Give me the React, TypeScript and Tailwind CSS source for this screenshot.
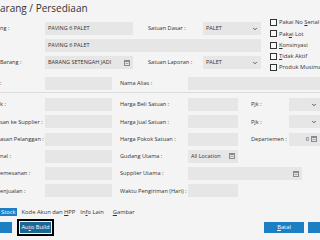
import { ChevronDown } from "lucide-react";

function LookupIcon() {
  return (
    <svg width="6" height="6" viewBox="0 0 6 6" className="shrink-0">
      <rect x="0.5" y="0.5" width="5" height="5" fill="none" stroke="#8a8a8a" />
      <rect x="0.5" y="0.5" width="5" height="1.5" fill="#8a8a8a" />
      <line x1="1.5" y1="3.5" x2="4.5" y2="3.5" stroke="#8a8a8a" strokeWidth="0.7" />
    </svg>
  );
}

function Field({ w, text, icon, select, right }: { w: string; text?: string; icon?: boolean; select?: boolean; right?: boolean }) {
  return (
    <div className={`${w} h-[13px] bg-[#e6e6e6] flex items-center px-[3px] shrink-0`}>
      <span className={`flex-1 truncate text-[5.5px] text-[#333] ${right ? "text-right pr-[2px]" : ""}`}>{text}</span>
      {icon && <LookupIcon />}
      {select && <ChevronDown size={6} strokeWidth={3.5} className="text-[#444]" />}
    </div>
  );
}

function Label({ w, children }: { w: string; children: React.ReactNode }) {
  return <div className={`${w} shrink-0 text-[5.6px] whitespace-nowrap`}>{children}</div>;
}

function Check({ children }: { children: React.ReactNode }) {
  return (
    <div className="flex items-center gap-[2px] h-[11.3px]">
      <div className="w-[7px] h-[7px] border border-[#333] bg-[#f9f9f9]" />
      <span className="text-[5.8px] whitespace-nowrap">{children}</span>
    </div>
  );
}

export default function App() {
  return (
    <div className="w-[320px] h-[240px] overflow-hidden bg-[#f4f4f4] text-[#333] font-['Open_Sans',sans-serif]">
      <div className="h-[22px] pt-[1px] text-[10px] leading-[14px] text-[#333]">arang / Persediaan</div>

      <div className="flex h-[55px]">
        <div className="w-[270px] shrink-0 flex flex-col gap-[4px]">
          <div className="flex items-center">
            <Label w="w-[45px]">ng :</Label>
            <Field w="w-[88px]" text="PAVING 6 PALET" />
            <Label w="w-[55px] ml-[15px]">Satuan Dasar :</Label>
            <Field w="w-[58px]" text="PALET" select />
          </div>
          <div className="flex items-center">
            <div className="w-[45px] shrink-0" />
            <Field w="w-[216px]" text="PAVING 6 PALET" />
          </div>
          <div className="flex items-center">
            <Label w="w-[45px]">Barang :</Label>
            <Field w="w-[88px]" text="BARANG SETENGAH JADI" icon />
            <Label w="w-[55px] ml-[15px]">Satuan Laporan :</Label>
            <Field w="w-[58px]" text="PALET" select />
          </div>
        </div>
        <div className="flex flex-col -mt-[5px]">
          <Check>Pakai No <u>S</u>erial</Check>
          <Check>Pak<u>a</u>i Lot</Check>
          <Check><u>K</u>onsinyasi</Check>
          <Check><u>T</u>idak Aktif</Check>
          <Check>Produk Musiman</Check>
        </div>
      </div>

      <div className="flex items-center">
        <Label w="w-[45px]">:</Label>
        <Field w="w-[67px]" />
        <Label w="w-[68px] ml-[8px]">Nama Alias :</Label>
        <Field w="w-[132px]" />
      </div>

      <div className="h-px bg-[#dcdcdc] mt-[2px] mb-[5px]" />

      <div className="flex flex-col gap-[4.3px]">
        <div className="flex items-center">
          <Label w="w-[45px]">k :</Label>
          <Field w="w-[67px]" />
          <Label w="w-[68px] ml-[8px]">Harga Beli Satuan :</Label>
          <Field w="w-[50px]" />
          <Label w="w-[38px] ml-[13px]">Pjk :</Label>
          <Field w="w-[31px]" select />
        </div>
        <div className="flex items-center">
          <Label w="w-[45px]">san ke Supplier :</Label>
          <Field w="w-[67px]" />
          <Label w="w-[68px] ml-[8px]">Harga Jual Satuan :</Label>
          <Field w="w-[50px]" />
          <Label w="w-[38px] ml-[13px]">Pjk :</Label>
          <Field w="w-[31px]" select />
        </div>
        <div className="flex items-center">
          <Label w="w-[45px]">asan Pelanggan :</Label>
          <Field w="w-[67px]" />
          <Label w="w-[68px] ml-[8px]">Harga Pokok Satuan :</Label>
          <Field w="w-[50px]" />
          <Label w="w-[38px] ml-[13px]">Departemen :</Label>
          <Field w="w-[31px]" text="0" icon right />
        </div>
        <div className="flex items-center">
          <Label w="w-[45px]">nal :</Label>
          <Field w="w-[67px]" />
          <Label w="w-[68px] ml-[8px]">Gudang Utama :</Label>
          <Field w="w-[50px]" text="All Location" icon />
        </div>
        <div className="flex items-center">
          <Label w="w-[45px]">emesanan :</Label>
          <Field w="w-[67px]" />
          <Label w="w-[68px] ml-[8px]">Supplier Utama :</Label>
          <Field w="w-[114px]" icon />
        </div>
        <div className="flex items-center">
          <Label w="w-[45px]">enjualan :</Label>
          <Field w="w-[67px]" />
          <Label w="w-[68px] ml-[8px]">Waktu Pengiriman (Hari) :</Label>
          <Field w="w-[50px]" />
        </div>
      </div>

      <div className="flex items-center h-[8px] mt-[11px] text-[5.8px] gap-[5px]">
        <span className="bg-[#1c7ec3] text-white px-[1px] h-[8px] leading-[8px]">Stock</span>
        <span>Kode Akun dan <u>H</u>PP</span>
        <span>In<u>f</u>o Lain</span>
        <span className="ml-[4px]"><u>G</u>ambar</span>
      </div>

      <div className="flex items-center mt-[3px]">
        <div className="w-[12px] h-[11px] bg-[#1c7ec3]" />
        <div className="ml-[5px] border-2 border-black p-px">
          <div className="w-[31px] h-[11px] bg-[#1a6796] text-white text-[5.8px] leading-[11px] text-center">Au<u>t</u>o Build</div>
        </div>
        <div className="flex-1" />
        <div className="w-[40px] h-[11px] bg-[#1c7ec3] text-white text-[5.8px] leading-[11px] text-center"><u>B</u>atal</div>
        <div className="w-[12px] h-[11px] bg-[#1c7ec3] ml-[4px]" />
      </div>
    </div>
  );
}
